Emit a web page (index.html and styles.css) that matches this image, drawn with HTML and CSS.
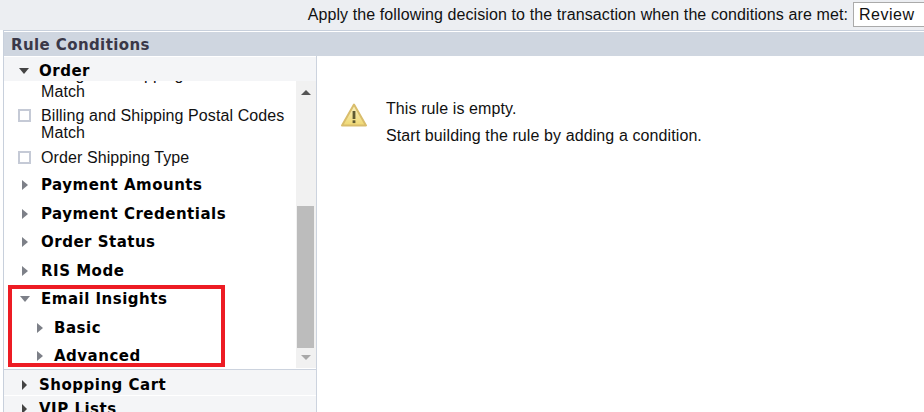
FILE: index.html
```html
<!DOCTYPE html>
<html lang="en">
<head>
  <meta charset="UTF-8">
  <meta name="viewport" content="width=device-width, initial-scale=1.0">
  <title>Rule Conditions</title>
  <link rel="stylesheet" href="styles.css">
</head>
<body>

  <div class="decision-bar">
    <span>Apply the following decision to the transaction when the conditions are met:</span>
    <div class="decision-select">Review</div>
  </div>

  <section class="panel">
    <h2 class="panel-title">Rule Conditions</h2>

    <div class="panel-body">
      <!-- Condition tree -->
      <div class="tree">
        <div class="group-row group-open">
          <span class="arrow arrow-down dark"></span>
          <span>Order</span>
        </div>

        <div class="tree-scroll">
          <div class="tree-list">
            <div class="check-row check-first">
              <span class="checkbox"></span>
              <span>Billing and Shipping Countries Match</span>
            </div>
            <div class="check-row">
              <span class="checkbox"></span>
              <span>Billing and Shipping Postal Codes Match</span>
            </div>
            <div class="check-row check-last">
              <span class="checkbox"></span>
              <span>Order Shipping Type</span>
            </div>
            <div class="item-row"><span class="arrow arrow-right"></span><span>Payment Amounts</span></div>
            <div class="item-row"><span class="arrow arrow-right"></span><span>Payment Credentials</span></div>
            <div class="item-row"><span class="arrow arrow-right"></span><span>Order Status</span></div>
            <div class="item-row"><span class="arrow arrow-right"></span><span>RIS Mode</span></div>
            <div class="highlight-group">
              <div class="item-row email-row"><span class="arrow arrow-down"></span><span>Email Insights</span></div>
              <div class="item-row sub-row"><span class="arrow arrow-right"></span><span>Basic</span></div>
              <div class="item-row sub-row"><span class="arrow arrow-right"></span><span>Advanced</span></div>
              <div class="highlight"></div>
            </div>
          </div>

          <div class="scrollbar">
            <span class="arrow-up-btn"></span>
            <div class="scroll-track"><div class="scroll-thumb"></div></div>
            <span class="arrow-down-btn"></span>
          </div>
        </div>

        <div class="group-row group-next">
          <span class="arrow arrow-right dark"></span>
          <span>Shopping Cart</span>
        </div>
        <div class="group-row">
          <span class="arrow arrow-right dark"></span>
          <span>VIP Lists</span>
        </div>
      </div>

      <!-- Empty rule message -->
      <div class="empty-rule">
        <svg class="warn-icon" width="26" height="24" viewBox="0 0 26 24">
          <defs>
            <linearGradient id="warn-fill" x1="0" y1="0" x2="0" y2="1">
              <stop offset="0" stop-color="#fbf3c4"/>
              <stop offset="1" stop-color="#efd873"/>
            </linearGradient>
          </defs>
          <path d="M13 1.5 L25 22.5 H1 Z" fill="url(#warn-fill)" stroke="#d9bd6c" stroke-width="2" stroke-linejoin="round"/>
          <rect x="11.6" y="8" width="2.8" height="8" fill="#5f5a32"/>
          <rect x="11.6" y="17.3" width="2.8" height="2.8" fill="#5f5a32"/>
        </svg>
        <div class="empty-text">
          <p>This rule is empty.</p>
          <p>Start building the rule by adding a condition.</p>
        </div>
      </div>
    </div>
  </section>

</body>
</html>
```

FILE: styles.css
```css
html, body {
  height: 100%;
}

body {
  margin: 0;
  padding: 0;
  background-color: #fff;
  font-family: 'Liberation Sans', Arial, sans-serif;
  font-size: 16px;
  color: #111;
  overflow: hidden;
}

.decision-bar {
  height: 30px;
  box-sizing: border-box;
  padding-top: 2px;
  background-color: #eceef2;
  display: flex;
  justify-content: flex-end;
  align-items: flex-start;
  gap: 5px;
  white-space: nowrap;
  overflow: hidden;
}

.decision-bar > span {
  line-height: 25px;
  letter-spacing: 0.1px;
  flex: none;
}

.decision-select {
  flex: none;
  width: 71px;
  height: 25px;
  box-sizing: border-box;
  border: 1px solid #aaa;
  border-right: none;
  background-color: #fff;
  padding-left: 5px;
  line-height: 23px;
  letter-spacing: 0.5px;
}

.panel {
  margin-left: 3px;
  border-top: 1px solid #c8d0dc;
  border-left: 1px solid #c8d0dc;
  padding-top: 1px;
  height: 382px;
  box-sizing: border-box;
}

.panel-title {
  margin: 0;
  height: 24px;
  padding-left: 7px;
  background-color: #cfd6e0;
  color: #3a3848;
  font-family: 'DejaVu Sans', sans-serif;
  font-size: 15px;
  font-weight: bold;
  letter-spacing: 0.4px;
  line-height: 27px;
}

.panel-body {
  display: flex;
  height: 356px;
}

.tree {
  width: 312px;
  flex: none;
  border-right: 1px solid #ccd3de;
  overflow: hidden;
  font-family: 'DejaVu Sans', sans-serif;
  font-size: 15px;
  font-weight: bold;
  letter-spacing: 0.5px;
  color: #000;
}

.group-row {
  height: 24px;
  box-sizing: border-box;
  padding-top: 2px;
  background-color: #f4f5f7;
  display: flex;
  align-items: center;
  padding-left: 18px;
  gap: 12px;
  margin-bottom: 2px;
}

.group-row .arrow-right {
  border-left-width: 5px;
}

.group-open {
  margin-top: 1px;
  margin-bottom: 0;
  padding-top: 4px;
  padding-left: 15px;
  gap: 10px;
}

.group-next {
  height: 26px;
  padding-top: 4px;
  border-top: 1px solid #ccd3de;
  margin-top: 1px;
  margin-bottom: 1px;
}

.tree-scroll {
  height: 287px;
  display: flex;
  overflow: hidden;
}

.tree-list {
  flex: 1;
  min-width: 0;
  margin-top: -15px;
}

.check-row {
  display: flex;
  padding-left: 14px;
  padding-right: 8px;
  gap: 10px;
  font-family: 'Liberation Sans', Arial, sans-serif;
  font-size: 16px;
  font-weight: normal;
  letter-spacing: 0.1px;
  line-height: 17px;
  color: #111;
  margin-bottom: 8px;
}

.check-first {
  margin-bottom: 7px;
}

.check-last {
  margin-bottom: 5px;
}

.checkbox {
  flex: none;
  width: 9px;
  height: 9px;
  margin-top: 2px;
  border: 2px solid #c5cad6;
  background-color: #fff;
}

.item-row {
  height: 28.5px;
  display: flex;
  align-items: center;
  padding-left: 18px;
  gap: 13px;
}

.email-row {
  padding-left: 16px;
  gap: 11px;
}

.sub-row {
  padding-left: 33px;
  gap: 11px;
}

.highlight-group {
  position: relative;
}

/* red annotation box drawn over the rows */
.highlight {
  position: absolute;
  left: 4px;
  top: 0;
  width: 209px;
  height: 74px;
  border: 4px solid #ed1c24;
}

.arrow {
  flex: none;
  display: inline-block;
  width: 0;
  height: 0;
}

.arrow-right {
  border-top: 5px solid transparent;
  border-bottom: 5px solid transparent;
  border-left: 6px solid #7d8088;
}

.arrow-down {
  border-left: 5px solid transparent;
  border-right: 5px solid transparent;
  border-top: 6px solid #7d8088;
}

.arrow-right.dark {
  border-left-color: #444;
}

.arrow-down.dark {
  border-top-color: #444;
}

.scrollbar {
  flex: none;
  width: 20px;
  background-color: #f1f1f1;
  display: flex;
  flex-direction: column;
  align-items: center;
}

.arrow-up-btn,
.arrow-down-btn {
  flex: none;
  width: 0;
  height: 0;
  border-left: 5px solid transparent;
  border-right: 5px solid transparent;
}

.arrow-up-btn {
  margin-top: 9px;
  border-bottom: 5px solid #555;
}

.arrow-down-btn {
  margin-bottom: 8px;
  margin-top: 7px;
  border-top: 5px solid #a8a8a8;
}

.scroll-track {
  flex: 1;
  width: 17px;
  align-self: flex-start;
  margin-left: 1px;
  display: flex;
  flex-direction: column;
  justify-content: flex-end;
}

.scroll-thumb {
  height: 142px;
  background-color: #bcbcbc;
}

.empty-rule {
  flex: 1;
  display: flex;
  padding: 44px 0 0 24px;
  gap: 19px;
  background-color: #fff;
}

.warn-icon {
  flex: none;
  margin-top: 3px;
}

.empty-text p {
  margin: 0 0 9px;
  line-height: 18px;
  letter-spacing: 0.1px;
  color: #111;
}
```
